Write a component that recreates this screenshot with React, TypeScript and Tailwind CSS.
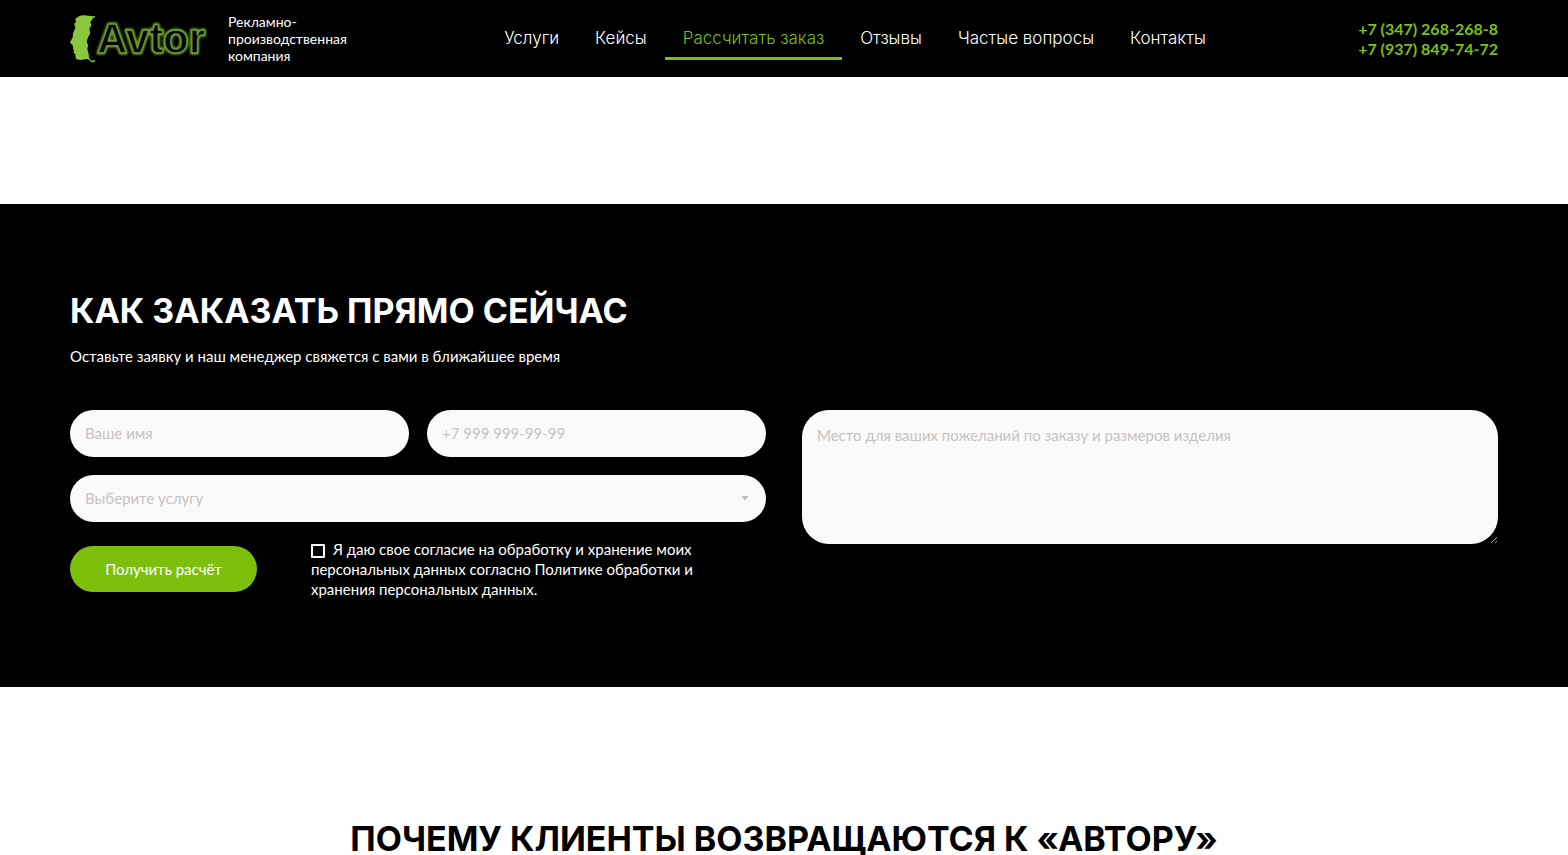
const navItems = [
  { label: 'Услуги', href: '#services' },
  { label: 'Кейсы', href: '#cases' },
  { label: 'Рассчитать заказ', href: '#order', active: true },
  { label: 'Отзывы', href: '#reviews' },
  { label: 'Частые вопросы', href: '#faq' },
  { label: 'Контакты', href: '#contacts' },
]

const phones = [
  { label: '+7 (347) 268-268-8', href: 'tel:+73472682688' },
  { label: '+7 (937) 849-74-72', href: 'tel:+79378497472' },
]

const services = ['Наружная реклама', 'Полиграфия', 'Сувениры']

const fieldClass =
  'w-full rounded-full bg-[#fafafa] px-[15px] pb-0.5 h-[47px] text-[15px] text-gray-900 placeholder:text-[#c7c2c2] outline-none focus-visible:ring-2 focus-visible:ring-[#7dbf0d]'

function Logo() {
  return (
    <svg viewBox="0 0 140 48" className="h-12 w-[140px] shrink-0 overflow-visible" aria-hidden="true">
      <defs>
        <filter id="glow" x="-10%" y="-20%" width="120%" height="140%">
          <feGaussianBlur stdDeviation="1.2" />
        </filter>
      </defs>
      <path
        d="M5 4.300C7 1.800 10 .3 13.500.2C17.500.1 21.500 1.600 25.300 1C24.500 2.800 22.600 3.300 22 4.700L20.200 7.300L21.600 10.300L19.300 13.700L20.300 18.500L18 22.300L16.700 26.700L18.200 30.800L17.300 34L18.700 39L19 42.500C19.600 44.500 21 45.700 22.300 45.800L25.500 45C25 46.500 24 47.300 22.600 47.400C20.600 46.800 20 45 18 44.200C15 43.600 12 45.500 9 44.800C7 44.500 6 44.500 5.700 43.300C5.500 41.500 6 40.500 5.200 39.300C4.400 38.500 3.600 38 3.500 37L4.200 35.500L3 34.200L3.300 32.500C2.800 31.200 2.600 30.500 2.200 29.500C1.200 29.200.2 28.500.2 27.300C.6 25.300 2.300 23.800 2.800 22C3 20.300 2.700 18.800 3.400 17.300L5.200 13.500C5.500 11.500 4.300 10.500 4.500 8.800L6.300 6.200Z"
        fill="#8cc63f"
      />
      <g fontFamily="'Liberation Sans', Arial, sans-serif" fontSize="42" fontWeight="700" strokeLinejoin="round">
        <text x="27" y="38" fill="none" stroke="#6fa52a" strokeWidth="3" filter="url(#glow)">
          Avtor
        </text>
        <text x="27" y="38" fill="#000" stroke="#6c9c30" strokeWidth="1.4">
          Avtor
        </text>
      </g>
    </svg>
  )
}

function Header() {
  return (
    <header className="flex h-[77px] items-center justify-between bg-black px-[70px]">
      <a href="#top" aria-label="Avtor" className="flex items-center gap-[18px]">
        <Logo />
        <span className="w-[124px] text-sm leading-[17px] text-white">Рекламно-производственная компания</span>
      </a>
      <nav className="flex font-['Inter',sans-serif] text-[17px] font-light">
        {navItems.map((item) => (
          <a
            key={item.label}
            href={item.href}
            aria-current={item.active ? 'page' : undefined}
            className={
              item.active
                ? 'flex h-[43px] items-center border-y-3 border-t-transparent border-b-[#7dbf0d] px-[18px] text-[#7dbf0d]'
                : 'flex h-[43px] items-center border-y-3 border-transparent px-[18px] text-white'
            }
          >
            {item.label}
          </a>
        ))}
      </nav>
      <div className="flex flex-col items-end text-base leading-5 font-bold text-[#7dbf0d]">
        {phones.map((phone) => (
          <a key={phone.label} href={phone.href}>
            {phone.label}
          </a>
        ))}
      </div>
    </header>
  )
}

function OrderForm() {
  return (
    <form className="mt-[42px] grid grid-cols-2 items-start gap-9">
      <div>
        <div className="grid grid-cols-2 gap-[18px]">
          <input type="text" aria-label="Ваше имя" placeholder="Ваше имя" className={fieldClass} />
          <input type="tel" aria-label="Телефон" placeholder="+7 999 999-99-99" className={fieldClass} />
          <div className="relative col-span-2">
            <select
              aria-label="Выберите услугу"
              defaultValue=""
              className="block h-[47px] w-full appearance-none rounded-full bg-[#fafafa] px-[15px] text-[15px] text-[#c7c2c2] outline-none focus-visible:ring-2 focus-visible:ring-[#7dbf0d]"
            >
              <option value="" disabled>
                Выберите услугу
              </option>
              {services.map((service) => (
                <option key={service}>{service}</option>
              ))}
            </select>
            <svg viewBox="0 0 8 5" className="pointer-events-none absolute top-[21px] right-[17px] h-[5px] w-2" aria-hidden="true">
              <path d="M.5 0h7L4 4.800z" fill="#c4bfbf" />
            </svg>
          </div>
        </div>
        <div className="mt-[17px] flex items-center gap-[54px]">
          <button type="submit" className="h-[46px] w-[187px] shrink-0 rounded-full bg-[#7dbf0d] text-[15px] text-white">
            Получить расчёт
          </button>
          <label className="max-w-[400px] text-[15px] leading-5 text-white">
            <input
              type="checkbox"
              className="mr-2 size-[14px] appearance-none rounded-[1px] border-2 border-white align-[-3px] checked:bg-[#7dbf0d]"
            />
            Я даю свое согласие на обработку и хранение моих персональных данных согласно Политике обработки и хранения
            персональных данных.
          </label>
        </div>
      </div>
      <textarea
        aria-label="Пожелания по заказу"
        placeholder="Место для ваших пожеланий по заказу и размеров изделия"
        className="block h-[134px] w-full rounded-[27px] bg-[#fafafa] px-[15px] py-[13px] text-[15px] leading-6 text-gray-900 outline-none placeholder:text-[#c7c2c2] focus-visible:ring-2 focus-visible:ring-[#7dbf0d]"
      />
    </form>
  )
}

export default function App() {
  return (
    <div id="top" className="bg-white font-['Lato','Noto_Sans',sans-serif]">
      <Header />
      <main className="pt-[127px]">
        <section id="order" className="bg-black px-[70px] pt-[91px] pb-[88px] text-white">
          <h2 className="font-['Inter',sans-serif] text-[34px] leading-8 font-bold">КАК ЗАКАЗАТЬ ПРЯМО СЕЙЧАС</h2>
          <p className="mt-[17px] text-[15px] leading-6">Оставьте заявку и наш менеджер свяжется с вами в ближайшее время</p>
          <OrderForm />
        </section>
        <section className="pt-[136px]">
          <h2 className="text-center font-['Inter',sans-serif] text-[34px] leading-8 font-bold text-black">
            ПОЧЕМУ КЛИЕНТЫ ВОЗВРАЩАЮТСЯ К «АВТОРУ»
          </h2>
        </section>
      </main>
    </div>
  )
}
